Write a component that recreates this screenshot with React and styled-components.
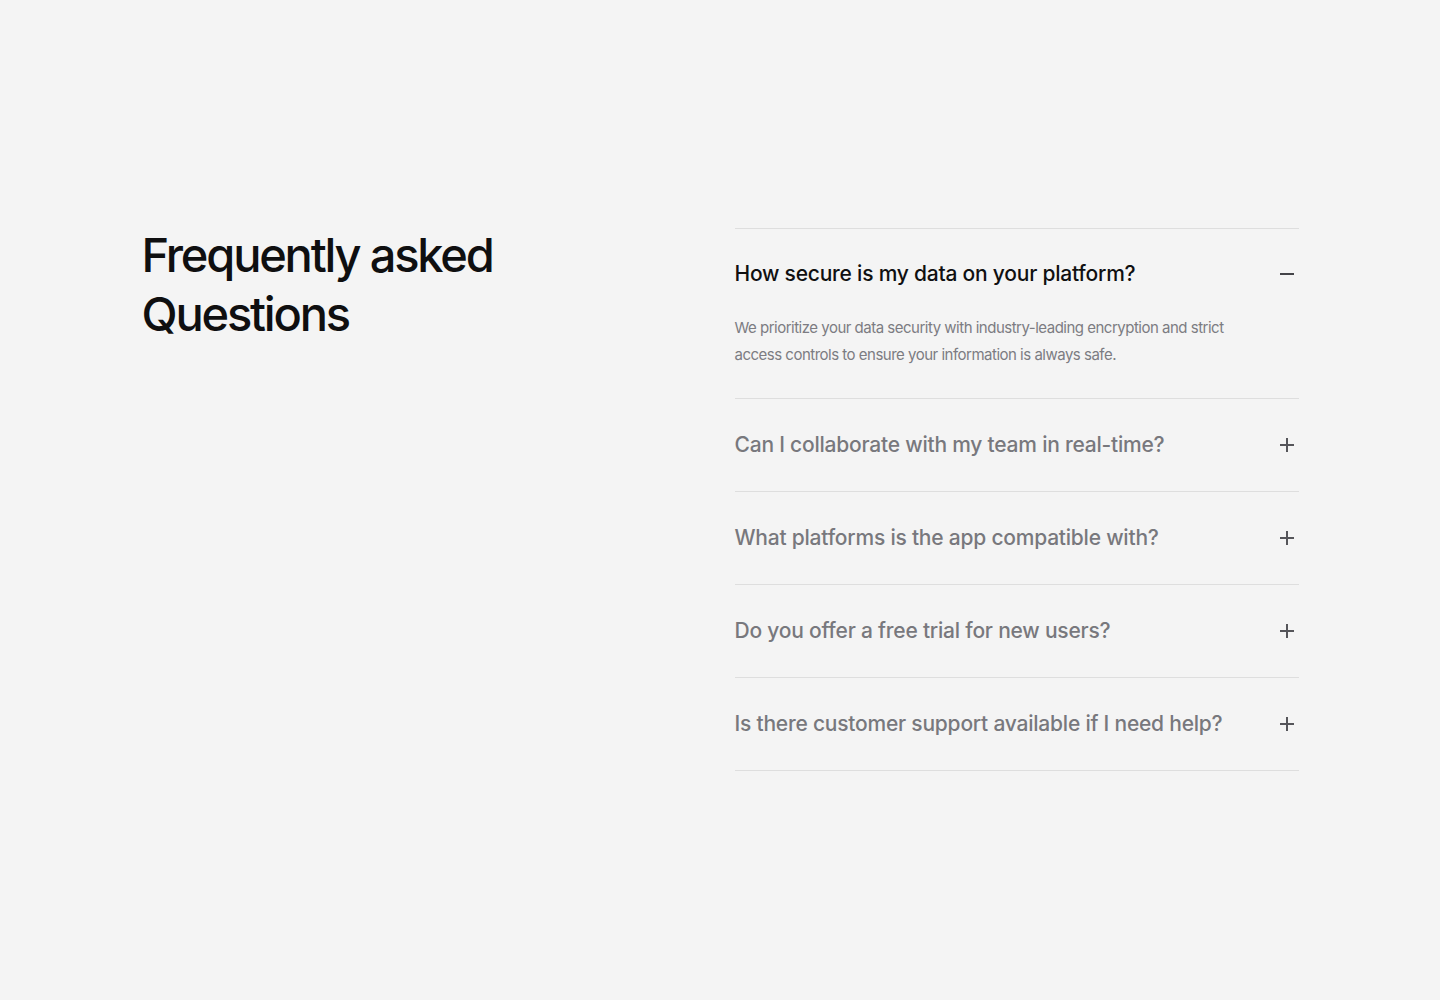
import React, { useState } from 'react'
import styled, { createGlobalStyle } from 'styled-components'

const GlobalStyle = createGlobalStyle`
  html, body {
    margin: 0;
    padding: 0;
    background: #f4f4f4;
    font-family: Inter, "Noto Sans", sans-serif;
    -webkit-font-smoothing: antialiased;
  }
`

const Section = styled.section`
  min-height: 1000px;
  box-sizing: border-box;
  padding-top: 228px;
`

const Container = styled.div`
  width: 1157px;
  margin: 0 auto;
  display: grid;
  grid-template-columns: 1fr 564px;
  align-items: start;
`

const Heading = styled.h2`
  margin: -3px 0 0;
  font-size: 47px;
  line-height: 59px;
  font-weight: 500;
  letter-spacing: -2.2px;
  color: #0f0f10;
`

const List = styled.div`
  border-top: 1px solid #dedede;
`

const Item = styled.div`
  border-bottom: 1px solid #dedede;
`

const Question = styled.button`
  all: unset;
  box-sizing: border-box;
  width: 100%;
  display: flex;
  align-items: center;
  justify-content: space-between;
  padding: ${(p) => (p.$open ? '29px 0 32px' : '30px 0 31px')};
  cursor: pointer;
  font-size: 21px;
  line-height: 31px;
  font-weight: 500;
  letter-spacing: -0.22px;
  color: ${(p) => (p.$open ? '#101011' : '#78787d')};
`

const Icon = styled.svg`
  flex: none;
  width: 16px;
  height: 16px;
  margin-right: 4px;
`

const Answer = styled.p`
  margin: -7px 0 0;
  padding: 0 60px 30px 0;
  font-size: 15px;
  line-height: 27px;
  letter-spacing: -0.5px;
  color: #7c7c82;
`

const faqs = [
  {
    q: 'How secure is my data on your platform?',
    a: 'We prioritize your data security with industry-leading encryption and strict access controls to ensure your information is always safe.',
  },
  { q: 'Can I collaborate with my team in real-time?', a: '' },
  { q: 'What platforms is the app compatible with?', a: '' },
  { q: 'Do you offer a free trial for new users?', a: '' },
  { q: 'Is there customer support available if I need help?', a: '' },
]

function Toggle({ open }) {
  return (
    <Icon viewBox="0 0 16 16" fill="none" stroke={open ? '#444448' : '#55555a'} strokeWidth="2">
      <line x1="1" y1="8" x2="15" y2="8" />
      {!open && <line x1="8" y1="1" x2="8" y2="15" />}
    </Icon>
  )
}

export default function App() {
  const [open, setOpen] = useState(0)

  return (
    <Section>
      <GlobalStyle />
      <Container>
        <Heading>
          Frequently asked
          <br />
          Questions
        </Heading>
        <List>
          {faqs.map((f, i) => (
            <Item key={f.q}>
              <Question $open={open === i} onClick={() => setOpen(open === i ? -1 : i)}>
                {f.q}
                <Toggle open={open === i} />
              </Question>
              {open === i && <Answer>{f.a}</Answer>}
            </Item>
          ))}
        </List>
      </Container>
    </Section>
  )
}
